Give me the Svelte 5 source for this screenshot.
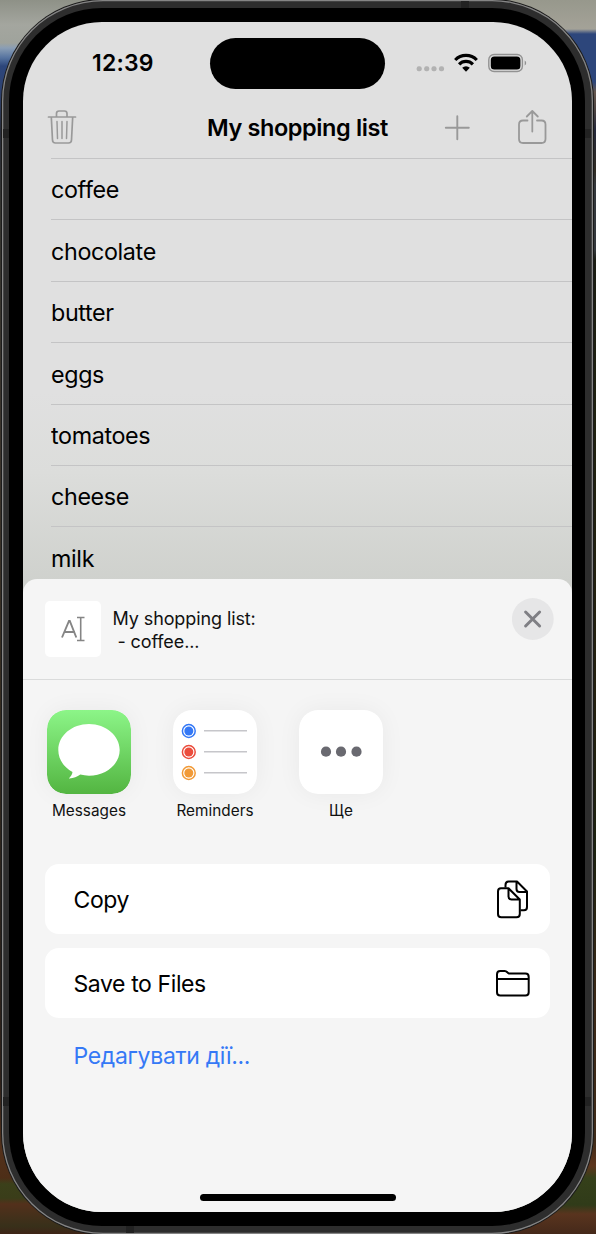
<script>
  const items = ['coffee', 'chocolate', 'butter', 'eggs', 'tomatoes', 'cheese', 'milk'];
  const reminders = ['#3478f6', '#eb4d3d', '#f19a37'];
</script>

<div class="desktop">
  <div class="phone">
    <i class="seam tl"></i><i class="seam tr"></i><i class="seam bl"></i><i class="seam br"></i><i class="seam top"></i><i class="seam bottom"></i>
    <div class="bezel">
      <main class="screen">
        <header class="status">
          <span class="time">12:39</span>
          <span class="island"></span>
          <svg class="signals" width="112" height="24" viewBox="0 0 112 24">
            <g fill="#b2b2b2"><rect x="1.700" y="15.300" width="5" height="5" rx="2"/><rect x="9.200" y="15.300" width="5" height="5" rx="2"/><rect x="16.500" y="15.300" width="5" height="5" rx="2"/><rect x="24" y="15.300" width="5" height="5" rx="2"/></g>
            <g fill="none" stroke="#000" stroke-width="3.200"><path d="M40.200 9a15 15 0 0 1 21.600 0"/><path d="M44.100 13.300a9.700 9.700 0 0 1 13.800 0"/></g>
            <path d="M47.200 16.700a5.400 5.400 0 0 1 7.600 0L51 20.700Z"/>
            <rect x="73.800" y="3.500" width="33.600" height="17" rx="5.300" fill="none" stroke="#929292" stroke-width="1.400"/>
            <rect x="75.800" y="5.600" width="29.600" height="12.800" rx="3.500"/>
            <path d="M109.700 9.500v5q1.500-.7 1.500-2.500t-1.500-2.500Z" fill="#929292"/>
          </svg>
        </header>
        <nav>
          <svg class="trash" width="30" height="36" viewBox="0 0 30 36" fill="none" stroke="#999" stroke-width="1.700" stroke-linecap="round" stroke-linejoin="round">
            <path d="M1.500 8h27M9.500 8V4.500q0-2.500 2.500-2.500h5.500q2.500 0 2.500 2.500V8M4.300 8l1.200 23q.1 3 3 3h13q2.900 0 3-3L25.700 8"/>
            <path stroke-width="1.500" d="m10 12.500.5 17M15 12.500v17M20 12.500l-.5 17"/>
          </svg>
          <h1>My shopping list</h1>
          <svg class="plus" width="26" height="26" viewBox="0 0 26 26" stroke="#999" stroke-width="1.900" stroke-linecap="round"><path d="M1.800 12.700h23M13.300 1.200v23"/></svg>
          <svg class="share" width="30" height="36" viewBox="0 0 30 36" fill="none" stroke="#999" stroke-width="1.800" stroke-linecap="round" stroke-linejoin="round"><path d="M10.500 11.500H6q-4 0-4 4V30q0 4 4 4h18.500q4 0 4-4V15.500q0-4-4-4H20M15.300 22.500V2M9.800 7.500 15.300 2l5.500 5.500"/></svg>
        </nav>
        <ul>
          {#each items as item}
            <li>{item}</li>
          {/each}
        </ul>
        <section class="sheet">
          <div class="summary">
            <svg class="thumb" width="56" height="56" viewBox="0 0 56 56"><rect width="56" height="56" rx="5" fill="#fff"/><path d="M17 36.500 24 20h.8l6.500 16.500M19 31h11" fill="none" stroke="#858585" stroke-width="1.900"/><path d="M32 16.500h7.500M32 39.500h7.500M35.700 16.500v23" stroke="#858585" stroke-width="1.600"/></svg>
            <p>My shopping list:<br /><span>&nbsp;- coffee...</span></p>
            <svg class="close" width="42" height="42" viewBox="0 0 42 42"><circle cx="20.800" cy="21" r="20.900" fill="#e6e6e7"/><path d="m13.600 14 14 14M27.600 14l-14 14" stroke="#7f7f84" stroke-width="3" stroke-linecap="round"/></svg>
          </div>
          <div class="apps">
            <div class="app">
              <svg width="84" height="84" viewBox="0 0 84 84">
                <defs><linearGradient id="green" x2="0" y2="1"><stop stop-color="#8cf588"/><stop offset="1" stop-color="#53b541"/></linearGradient></defs>
                <rect width="84" height="84" rx="19" fill="url(#green)"/>
                <path d="M42 14C25 14 11.300 25.500 11.300 40c0 9.300 5.500 17.300 14.200 22-.4 2.700-1.800 4.700-3.700 6.500 4.300.2 8.300-1.600 11.500-3.900 2.800.7 5.700 1.100 8.700 1.100 17 0 30.700-11.500 30.700-25.700S59 14 42 14Z" fill="#fff"/>
              </svg>
              <span>Messages</span>
            </div>
            <div class="app">
              <svg width="84" height="84" viewBox="0 0 84 84">
                <rect width="84" height="84" rx="19" fill="#fff"/>
                {#each reminders as color, i}
                  <circle cx="15.800" cy={21 + i * 21} r="6.400" fill="none" stroke={color} stroke-width="1.500"/>
                  <circle cx="15.800" cy={21 + i * 21} r="4.500" fill={color}/>
                  <path d="M31 {20.700 + i * 21}h43" stroke="#c6c6ca" stroke-width="1.500"/>
                {/each}
              </svg>
              <span>Reminders</span>
            </div>
            <div class="app">
              <svg width="84" height="84" viewBox="0 0 84 84"><rect width="84" height="84" rx="19" fill="#fff"/><g fill="#696970"><circle cx="27" cy="41.700" r="5.100"/><circle cx="42" cy="41.700" r="5.100"/><circle cx="57.500" cy="41.700" r="5.100"/></g></svg>
              <span>Ще</span>
            </div>
          </div>
          <div class="actions">
            <div class="action"><span>Copy</span>
              <svg width="36" height="42" viewBox="0 0 36 42" fill="none" stroke="#000" stroke-width="2" stroke-linejoin="round"><path d="M10.500 9.500V7q0-3.500 3-3.500H22L32 13.500V29q0 3.300-3 3.300h-3.500M21.500 3.500V11q0 3 3 3H32"/><path d="M6 10.300h7.500L24.800 21.500V36q0 3.300-3.300 3.300H6.300Q3 39.300 3 36V13.500q0-3.200 3-3.200ZM13.500 10.500v8q0 3 3 3h8.300"/></svg>
            </div>
            <div class="action"><span>Save to Files</span>
              <svg width="36" height="30" viewBox="0 0 36 30" fill="none" stroke="#000" stroke-width="2" stroke-linejoin="round"><path d="M2 11.100V6.300Q2 3 5.300 3h4.400q1.500 0 2.600 1.200l.8.700q.8.700 2 .7h15.300q3.300 0 3.300 3.300v15.300q0 3.300-3.300 3.300H5.300Q2 27.500 2 24.200V11.100h31.700"/></svg>
            </div>
            <a href="#edit">Редагувати дії...</a>
          </div>
          <i class="home"></i>
        </section>
      </main>
    </div>
  </div>
</div>

<style>
  :global(body) { margin: 0; overflow: hidden; }
  * { box-sizing: border-box; }
  svg { display: block; flex: none; }
  .desktop { width: 596px; height: 1234px; padding: 0 3px 0 2px; overflow: hidden; font-family: Inter, "Liberation Sans", sans-serif; color: #000; background:
    linear-gradient(#97988c 0, #a4a298 29px, #2d467b 34px, #2d467b 82px, #66584f 92px, #4b4240 110px, #24283a 130px, #302b22 170px, #33373b 185px, #33373b 250px, #1a1c12 260px, #1f2110 420px, #24200f 700px, #1c2210 850px, #3b2817 1000px, #3e2a18 1140px, #5d351d 1166px, #35401a 1178px, #303b19 1205px, #59341e 1214px, #45291a 1234px) right / 50% 100% no-repeat,
    linear-gradient(#8e9187 0, #a4a69f 25px, #9fa39c 43px, #8a9eb5 48px, #55729f 58px, #2d467b 66px, #2e4270 92px, #282c38 130px, #34342f 210px, #3a332b 450px, #352c20 700px, #29221c 900px, #2c2019 1080px, #53311b 1150px, #4d2e17 1178px, #3b401a 1184px, #3a3d19 1198px, #53301b 1204px, #38301a 1226px, #3e2417 1234px) left / 50% 100% no-repeat; }
  .phone { position: relative; height: 1234px; padding: 8px 8px 8px 7px; background: #2d2d2d; border-radius: 101px; box-shadow: inset 0 0 0 1.300px #858585, 0 0 0 1px #1b1b1b; }
  .bezel { height: 1218px; padding: 14px 13px 14px 14px; background: #000; border-radius: 93px; }
  .screen { display: flex; flex-direction: column; height: 1190px; width: 549px; background: linear-gradient(#e0e0e0 0, #e0e0e0 370px, #dcdddb 450px, #cfd1cd 560px); border-radius: 79px; overflow: hidden; }
  .seam { position: absolute; width: 6px; height: 9px; background: #222; }
  .tl { left: 1px; top: 129px; } .tr { right: 2px; top: 129px; } .bl { left: 1px; top: 1097px; } .br { right: 2px; top: 1097px; }
  .top { left: 459px; top: 1px; width: 8px; height: 7px; } .bottom { left: 124px; bottom: 1px; width: 8px; height: 7px; }
  .status { display: flex; height: 82px; flex: none; padding: 16px 45px 0 69px; }
  .time { width: 118px; padding-top: 10px; font-size: 23px; font-weight: 600; line-height: 30px; letter-spacing: .2px; }
  .island { width: 175px; height: 51px; border-radius: 26px; background: #000; }
  .signals { margin: 13px 0 0 30px; }
  nav { display: flex; align-items: flex-start; height: 54px; flex: none; padding-left: 24px; }
  .trash { margin-top: 5px; }
  h1 { width: 182px; margin: 9px 0 0 130px; font-size: 23.500px; font-weight: 600; line-height: 30px; letter-spacing: -.4px; white-space: nowrap; }
  .plus { margin: 11px 0 0 55px; }
  .share { margin: 5px 0 0 47px; }
  ul { display: flex; flex-direction: column; height: 421px; overflow: hidden; flex: none; margin: 0 0 0 28px; padding: 0; list-style: none; }
  li { height: 61.400px; flex: none; padding-top: 16.400px; border-top: 1px solid #c4c4c5; font-size: 23.300px; line-height: 30px; letter-spacing: -.35px; }
  .sheet { display: flex; flex-direction: column; flex: none; height: 633px; background: #f5f5f5; border-radius: 14px 14px 0 0; }
  .summary { display: flex; height: 101px; flex: none; padding: 19px 18px 0 22px; border-bottom: 1px solid #dadbdb; }
  .thumb { margin-top: 3px; }
  p { flex: 1; margin: 10px 0 0 11.500px; font-size: 18px; line-height: 22.500px; letter-spacing: -.1px; color: #111; }
  .apps { display: flex; gap: 42px; height: 184px; flex: none; padding: 30px 0 0 24px; }
  .app { width: 84px; display: flex; flex-direction: column; align-items: center; font-size: 15.300px; line-height: 20px; letter-spacing: .05px; color: #111; white-space: nowrap; }
  .app svg { border-radius: 19px; box-shadow: 0 0 24px rgb(0 0 0 / .05); }
  .app span { margin-top: 7px; }
  .actions { display: flex; flex-direction: column; gap: 14px; padding: 0 22px; }
  .action { display: flex; align-items: center; justify-content: space-between; height: 70px; padding: 0 19px 0 28.500px; background: #fff; border-radius: 14px; font-size: 23px; letter-spacing: -.4px; }
  .action span { padding-top: 2px; }
  a { margin: 9px 0 0 28.500px; color: #3579f6; text-decoration: none; font-size: 23px; line-height: 30px; letter-spacing: -.32px; }
  .home { width: 196px; height: 7px; margin: auto auto 11px 177px; border-radius: 4px; background: #000; }
</style>
